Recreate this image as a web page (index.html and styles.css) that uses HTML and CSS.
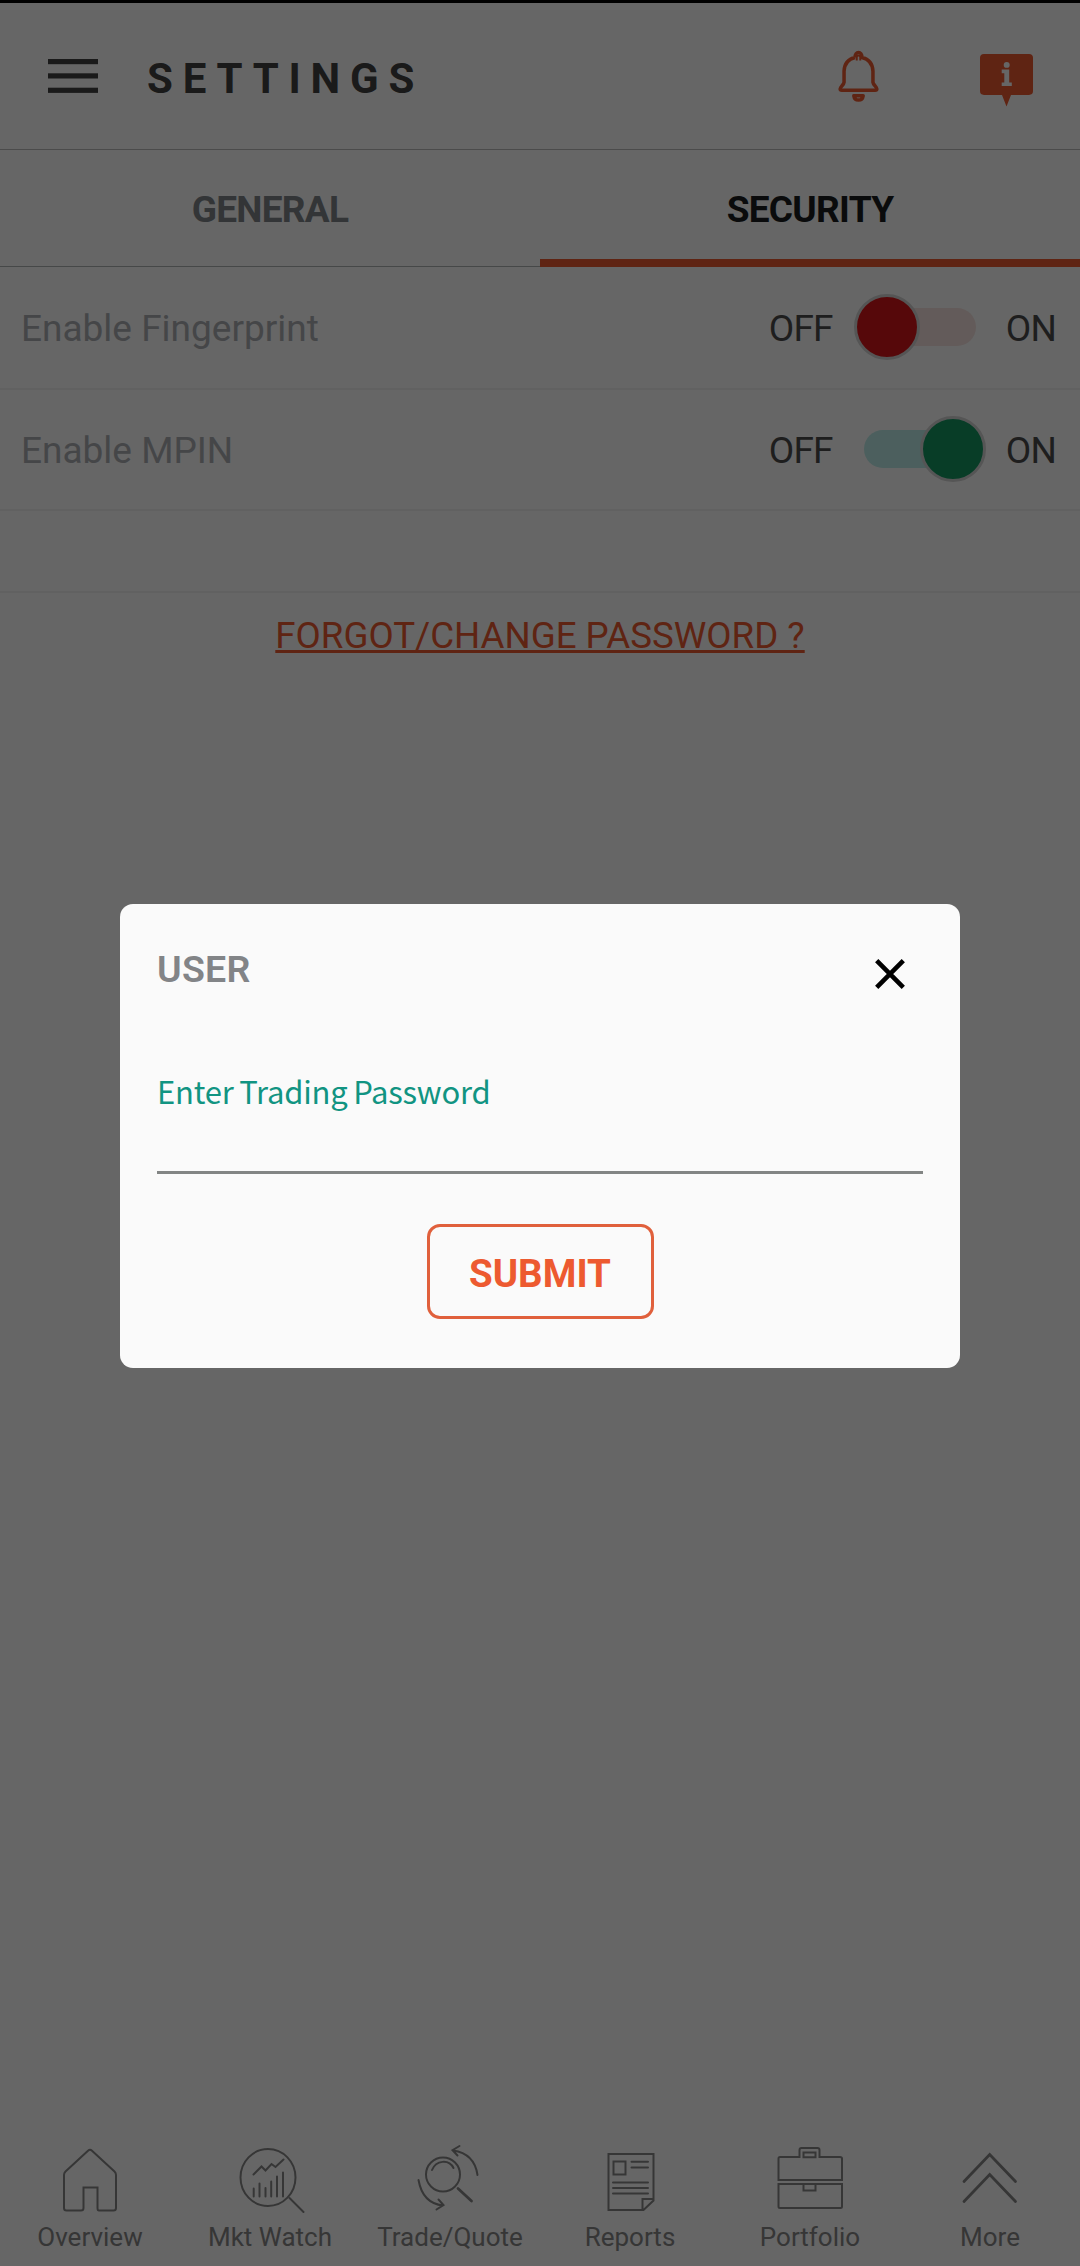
FILE: index.html
```html
<!DOCTYPE html>
<html lang="en">
<head>
    <meta charset="UTF-8">
    <title>Settings</title>
    <link rel="stylesheet" href="styles.css">
</head>
<body>

<div class="app">
    <header class="header">
        <svg class="menu-icon" width="50" height="35" viewBox="0 0 50 35" fill="#434343">
            <rect y="0" width="50" height="5.2"/>
            <rect y="14.3" width="50" height="5.2"/>
            <rect y="28.7" width="50" height="5.2"/>
        </svg>
        <h1>SETTINGS</h1>
        <svg class="bell-icon" width="41" height="52" viewBox="0 0 42 54" preserveAspectRatio="none" fill="none" stroke="#ed5a30" stroke-width="3.6" stroke-linejoin="round">
            <path d="M19.200 11V7.500a1.800 1.800 0 0 1 3.600 0V11" stroke-width="2"/>
            <path d="M17.500 7.800C10.500 9.500 6.500 14 6.200 22V33.500C6 36 2.200 38.500 2.200 40.500Q2.200 41.800 4 41.800H38Q39.800 41.800 39.800 40.500C39.800 38.500 36 36 35.800 33.500V22C35.500 14 31.500 9.500 24.500 7.800C25 0.800 17 0.800 17.500 7.800"/>
            <path d="M16.200 47.500H25.800C25 53.500 17 53.500 16.200 47.500Z"/>
        </svg>
        <svg class="info-icon" width="53" height="53" viewBox="0 0 53 55" preserveAspectRatio="none">
            <path fill="#ed5a30" d="M4 0H49Q53 0 53 4V38.500Q53 42.500 49 42.500H31L26.500 54.500L22 42.500H4Q0 42.500 0 38.500V4Q0 0 4 0Z"/>
            <circle fill="#fff" cx="26.700" cy="11.300" r="3"/>
            <path fill="#fff" d="M21.700 16.200H29.200V29.500H31.800V33.200H21.700V29.500H24.300V20H21.700Z"/>
        </svg>
    </header>

    <nav class="tabs">
        <div class="tab">GENERAL</div>
        <div class="tab active">SECURITY</div>
    </nav>

    <div class="row">
        <span class="row-label">Enable Fingerprint</span>
        <span class="state">OFF</span>
        <span class="switch off"><span class="thumb"></span></span>
        <span class="state">ON</span>
    </div>
    <div class="row">
        <span class="row-label">Enable MPIN</span>
        <span class="state">OFF</span>
        <span class="switch on"><span class="thumb"></span></span>
        <span class="state">ON</span>
    </div>
    <div class="row row-empty"></div>

    <a class="forgot">FORGOT/CHANGE PASSWORD ?</a>

    <footer class="bottom-nav">
        <div class="nav-item">
            <svg width="72" height="72" viewBox="0 0 72 72">
                <path d="M12.500 63.500Q10 63.500 10 61V28Q10 26 11.500 24.500L34 3.700Q36 1.900 38 3.700L60.500 24.500Q62 26 62 28V61Q62 63.500 59.500 63.500H45Q43.500 63.500 43.500 61V40.500H29.500V61Q29.500 63.500 27 63.500Z"/>
            </svg>
            <span>Overview</span>
        </div>
        <div class="nav-item">
            <svg width="72" height="72" viewBox="0 0 72 72">
                <ellipse cx="34" cy="30.500" rx="27.500" ry="28.500"/>
                <path d="M55.500 51L69.500 65M19.500 27.500L27.500 19.500L31.500 23.500L37.500 17L41.500 20L49.500 12.500"/>
                <path d="M19.700 41.500V49.500M25.500 36.500V49.500M31.500 41V49.500M37.200 34.500V49.500M43 29.500V49.500M49 25.500V49.500"/>
            </svg>
            <span>Mkt Watch</span>
        </div>
        <div class="nav-item">
            <svg width="72" height="72" viewBox="0 0 72 72">
                <circle cx="29" cy="27.500" r="17"/>
                <path d="M18 23C22 13 35 12 39.500 21"/>
                <path class="thick" d="M44 41.500L57.500 54"/>
                <path d="M63.500 28C61.500 14 53 5.500 39 3.500M45.500 -1L38.500 3.200L43.500 8.500"/>
                <path d="M4.500 33C7 47 15 57 29 58.500M24.500 52.500L29.500 58L22.500 62.500"/>
            </svg>
            <span>Trade/Quote</span>
        </div>
        <div class="nav-item">
            <svg width="72" height="72" viewBox="0 0 72 72">
                <path d="M14.500 7H59.500V53.500L49.500 63H14.500ZM59.500 52H48.500V63"/>
                <path d="M19.500 14.500H31.500V27.500H19.500ZM37.500 14.800H54M37.500 20.500H54M19 35.500H54M19 41H54M19 46.500H54"/>
            </svg>
            <span>Reports</span>
        </div>
        <div class="nav-item">
            <svg width="72" height="72" viewBox="0 0 72 72">
                <path d="M4.500 33V11.500Q4.500 10 6 10H25.500V3Q25.500 1 27.500 1H43.500Q45.500 1 45.500 3V10H66Q68 10 68 11.500V33ZM29.500 5.500H41.500V10.200H29.500Z"/>
                <path d="M4.500 37H68V59.500Q68 61 66.500 61H6Q4.500 61 4.500 59.500ZM29.500 37V43.500H41.500V37"/>
            </svg>
            <span>Portfolio</span>
        </div>
        <div class="nav-item">
            <svg class="thick" width="72" height="72" viewBox="0 0 72 72">
                <path d="M10 34.500L35.700 7.500L61.500 34.500M10 54.500L35.700 27.500L61.500 54.500"/>
            </svg>
            <span>More</span>
        </div>
    </footer>
</div>

<div class="overlay">
    <div class="dialog">
        <div class="dialog-header">
            <h2>USER</h2>
            <svg class="close-icon" width="32" height="32" viewBox="0 0 32 32" stroke="#000" stroke-width="4.600">
                <path d="M2.700 2.700L29.300 29.300M29.300 2.700L2.700 29.300"/>
            </svg>
        </div>
        <label for="trading-password">Enter Trading Password</label>
        <input type="password" id="trading-password">
        <button>SUBMIT</button>
    </div>
</div>

</body>
</html>
```

FILE: styles.css
```css
* {
    box-sizing: border-box;
}
body {
    font-family: Roboto, sans-serif;
    background-color: #fff;
    margin: 0;
    padding: 0;
}
.app {
    display: flex;
    flex-direction: column;
    height: 2266px;
    border-top: 3px solid #000;
}
.header {
    display: flex;
    height: 147px;
    padding: 0 47px 0 48px;
    border-bottom: 1px solid #bbb;
}
.menu-icon {
    margin-top: 56px;
}
.header h1 {
    flex: 1;
    margin: 48px 0 0 49px;
    font-size: 42px;
    line-height: 56px;
    font-weight: 700;
    letter-spacing: 9.8px;
    color: #434343;
}
.bell-icon {
    margin-top: 47px;
}
.info-icon {
    margin: 51px 0 0 101px;
}
.tabs {
    display: flex;
    height: 117px;
}
.tab {
    flex: 1;
    padding-top: 5px;
    text-align: center;
    font-size: 37px;
    line-height: 110px;
    font-weight: 700;
    letter-spacing: -0.7px;
    color: #808489;
    border-bottom: 1px solid #b0b3b5;
}
.tab.active {
    color: #1b1d20;
    border-bottom: 8px solid #ed5a30;
}
.row {
    display: flex;
    align-items: center;
    height: 123px;
    padding: 2px 24px 0 21px;
    font-size: 37px;
    border-bottom: 2px solid #f3f3f3;
}
.row + .row {
    height: 121px;
}
.row-label {
    flex: 1;
    color: #adb0b4;
}
.state {
    letter-spacing: -0.8px;
    color: #4d4d4d;
}
.row + .row-empty {
    height: 82px;
}
.switch {
    position: relative;
    width: 112px;
    height: 38px;
    margin: 0 30px 4px 31px;
    border-radius: 19px;
}
.thumb {
    position: absolute;
    top: -14px;
    width: 66px;
    height: 66px;
    border: 3px solid #d5d5d5;
    border-radius: 50%;
}
.off {
    background-color: #f7e4e1;
}
.off .thumb {
    left: -10px;
    background-color: #d71619;
}
.on {
    background-color: #bdeeea;
}
.on .thumb {
    right: -10px;
    background-color: #149863;
}
.forgot {
    align-self: center;
    margin-top: 21px;
    font-size: 36.7px;
    color: #ed5a30;
    text-decoration: underline;
}
.bottom-nav {
    display: flex;
    margin-top: auto;
    padding-bottom: 13px;
}
.nav-item {
    flex: 1;
    display: flex;
    flex-direction: column;
    align-items: center;
    gap: 2px;
    font-size: 26px;
    line-height: 32px;
    color: #888;
}
.nav-item svg {
    overflow: visible;
    fill: none;
    stroke: #888;
    stroke-width: 2;
    stroke-linecap: round;
}
.nav-item .thick {
    stroke-width: 2.8;
}
.overlay {
    position: fixed;
    top: 0;
    left: 0;
    width: 100%;
    height: 2266px;
    display: flex;
    justify-content: center;
    padding-top: 904px;
    background-color: rgba(0, 0, 0, 0.6);
}
.dialog {
    display: flex;
    flex-direction: column;
    width: 840px;
    height: 464px;
    padding: 0 37px;
    background-color: #fafafa;
    border-radius: 13px;
}
.dialog-header {
    display: flex;
    justify-content: space-between;
    padding: 41px 17px 0 0;
}
.dialog-header h2 {
    margin: 0;
    font-size: 37.5px;
    line-height: 48px;
    font-weight: 600;
    letter-spacing: 0.3px;
    color: #828487;
}
.close-icon {
    margin-top: 13px;
}
.dialog label {
    margin-top: 73px;
    font-family: "Noto Sans CJK SC", sans-serif;
    font-size: 31px;
    line-height: 50px;
    letter-spacing: -0.22px;
    word-spacing: -1px;
    color: #119482;
}
.dialog input {
    height: 58px;
    padding: 0;
    border: none;
    border-bottom: 3px solid #828584;
    background: none;
}
.dialog button {
    align-self: center;
    width: 227px;
    height: 95px;
    margin-top: 50px;
    padding: 4px 0 0;
    font-family: Roboto, sans-serif;
    font-size: 38.5px;
    font-weight: 700;
    color: #ed5a30;
    background: none;
    border: 3px solid #e0603c;
    border-radius: 13px;
}
```
